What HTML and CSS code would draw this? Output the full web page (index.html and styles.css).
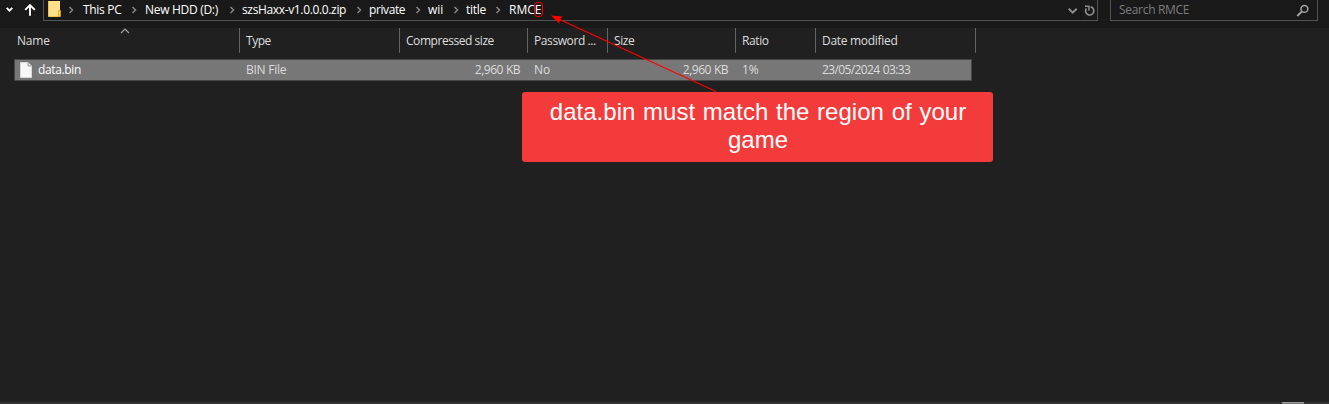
FILE: index.html
```html
<!DOCTYPE html>
<html lang="en">
<head>
<meta charset="utf-8">
<title>RMCE</title>
<link rel="stylesheet" href="styles.css">
</head>
<body>
<div class="window">
  <header class="toolbar">
    <svg class="nav-icons" width="43" height="28" viewBox="0 0 43 28" fill="none" stroke="#fff">
      <path d="M6.7 7.8 9.5 10.6 12.3 7.8" stroke-width="1.9"/>
      <path d="M30 15.8V5M25.2 9.8 30 5 34.8 9.8" stroke-width="1.9"/>
    </svg>
    <div class="address">
      <svg class="folder" width="20" height="20" viewBox="0 0 20 20">
        <path d="M4 1H16V16.5H4Z" fill="#ffe08a"/>
        <path d="M4.5 1V16.5H15" fill="none" stroke="#f3c44c"/>
        <path d="M14.5 10.5H16.5V16.5H14.5Z" fill="#ffd45e" stroke="#d9a520" stroke-width=".8"/>
      </svg>
      <nav class="crumbs">
        <svg class="sep" viewBox="0 0 6 8"><path d="M1.5 1 4.5 4 1.5 7"/></svg><span class="c-pc">This PC</span>
        <svg class="sep" viewBox="0 0 6 8"><path d="M1.5 1 4.5 4 1.5 7"/></svg><span class="c-hdd">New HDD (D:)</span>
        <svg class="sep" viewBox="0 0 6 8"><path d="M1.5 1 4.5 4 1.5 7"/></svg><span class="c-zip">szsHaxx-v1.0.0.0.zip</span>
        <svg class="sep" viewBox="0 0 6 8"><path d="M1.5 1 4.5 4 1.5 7"/></svg><span class="c-priv">private</span>
        <svg class="sep" viewBox="0 0 6 8"><path d="M1.5 1 4.5 4 1.5 7"/></svg><span class="c-wii">wii</span>
        <svg class="sep" viewBox="0 0 6 8"><path d="M1.5 1 4.5 4 1.5 7"/></svg><span class="c-title">title</span>
        <svg class="sep" viewBox="0 0 6 8"><path d="M1.5 1 4.5 4 1.5 7"/></svg><span class="c-rmce">RMCE</span>
      </nav>
      <svg class="address-tools" width="33" height="20" viewBox="0 0 33 20" fill="none" stroke="#8c8c8c">
        <path d="M4.7 8.7 8.7 12.7 12.7 8.7" stroke-width="2"/>
        <path d="M16.5 0V20" stroke="#151515"/>
        <path d="M26.6 6.9A4.1 4.1 0 1 1 22.3 8.6" stroke-width="1.7"/>
        <path d="M21 6.3H24.9V10.4" stroke-width="1.5"/>
      </svg>
    </div>
    <div class="search">
      <span>Search RMCE</span>
      <svg width="14" height="14" viewBox="0 0 14 14" fill="none" stroke="#a2a2a2">
        <circle cx="9.4" cy="4.9" r="3.4" stroke-width="1.6"/>
        <path d="M6.9 7.4 2.3 12" stroke-width="2"/>
      </svg>
    </div>
  </header>
  <main class="list">
    <div class="row head">
      <div><span class="h-name">Name</span></div>
      <div><span class="h-type">Type</span></div>
      <div><span class="h-comp">Compressed size</span></div>
      <div><span class="h-pass">Password ...</span></div>
      <div><span class="h-size">Size</span></div>
      <div><span class="h-ratio">Ratio</span></div>
      <div><span class="h-date">Date modified</span></div>
      <svg class="sort" width="10" height="6" viewBox="0 0 10 6"><path d="M1 5 5 1 9 5" fill="none" stroke="#a0a0a0" stroke-width="1.2"/></svg>
    </div>
    <div class="row file">
      <div class="filename">
        <svg width="12" height="16" viewBox="0 0 12 16"><path d="M.5.5H8L11.5 4V15.5H.5Z" fill="#f8f8f8" stroke="#d8d8d8"/><path d="M8 .5V4H11.5" fill="#ddd" stroke="#888" stroke-width=".8"/></svg>
        <span class="f-name">data.bin</span>
      </div>
      <div><span class="f-type">BIN File</span></div>
      <div class="num"><span class="f-kb">2,960 KB</span></div>
      <div><span class="f-no">No</span></div>
      <div class="num"><span class="f-kb">2,960 KB</span></div>
      <div><span class="f-ratio">1%</span></div>
      <div><span class="f-date">23/05/2024 03:33</span></div>
    </div>
  </main>
  <footer class="status"><span class="view-toggle"></span></footer>
  <svg class="arrow" width="1329" height="404" viewBox="0 0 1329 404">
    <rect x="534.5" y="2.5" width="8" height="14" rx="3" fill="none" stroke="#f00"/>
    <path d="M558 18.8 716 91.5" stroke="#f00" stroke-width="1.1"/>
    <path d="M551 15.5 562.5 16.5 559.5 19.5 559.5 23.8Z" fill="#f00"/>
  </svg>
  <div class="callout">data.bin must match the region of your<br>game</div>
</div>
</body>
</html>
```
FILE: styles.css
```css
* { box-sizing: border-box; }
body { margin: 0; background: #202020; font: 12px/16px "Open Sans", "Noto Sans", sans-serif; color: #fff; overflow: hidden; }
svg { display: block; flex: none; }
.window { position: relative; width: 1329px; height: 404px; display: flex; flex-direction: column; overflow: hidden; }
.toolbar { display: flex; align-items: flex-start; height: 28px; background: #191919; }
.address { display: flex; width: 1055px; height: 21px; border: solid #535353; border-width: 0 1px 1px; }
.folder { margin-right: 4px; }
.crumbs { display: grid; grid-template-columns: 15px 48px 14px 84px 13px 114px 13px 46px 13px 25px 13px 29px 14px 60px; height: 20px; align-items: center; white-space: nowrap; }
.crumbs span { height: 16px; margin-top: -1px; }
.sep { width: 6px; height: 8px; fill: none; stroke: #858585; stroke-width: 1.5; }
.address-tools { margin-left: auto; }
.search { display: flex; justify-content: space-between; margin-left: 12px; width: 208px; height: 21px; padding: 2px 8px 0; border: solid #535353; border-width: 0 1px 1px; color: #7c7c7c; }
.search span { letter-spacing: -.3px; }
.search svg { margin-top: 2px; }
.list { flex: 1; }
.row { display: grid; grid-template-columns: 225px 160px 128px 80px 128px 80px 160px; white-space: nowrap; }
.head { position: relative; width: 976px; height: 25px; padding-left: 15px; color: #dedede; }
.head > div { border-right: 1px solid #636363; padding: 5px 0 0 6px; }
.head > div:first-child { padding-left: 2px; }
.h-name { letter-spacing: -.2px; }
.sort { position: absolute; left: 120px; top: 0; }
.file { width: 958px; height: 22px; margin: 6px 0 0 14px; border: 1px solid #464646; background: #777; color: #dcdcdc; align-items: center; }
.file > div { padding-left: 6px; margin-top: -1px; }
.file .filename { display: flex; align-items: center; gap: 6px; padding-left: 5px; color: #fff; }
.file .num { text-align: right; padding-right: 8px; }
.status { height: 2px; background: #333; display: flex; justify-content: flex-end; }
.view-toggle { width: 22px; height: 2px; margin-right: 25px; background: #777; border-top: 1px solid #999; }
.arrow { position: absolute; left: 0; top: 0; }
.callout { position: absolute; left: 522px; top: 92px; width: 471px; height: 70px; padding-top: 6px; border-radius: 3px; background: #f43b3b; font: 24px/28px "Liberation Sans", Arial, sans-serif; word-spacing: 1px; text-align: center; padding-left: 1px; }

/* tracking for the compact labels */
.c-pc, .c-hdd, .c-title, .h-date { letter-spacing: -.3px; }
.c-zip, .f-name { letter-spacing: -.35px; }
.c-priv, .h-pass, .h-ratio, .h-size { letter-spacing: -.4px; }
.h-comp, .h-type { letter-spacing: -.45px; }
.f-kb { letter-spacing: -.5px; word-spacing: .4px; }
.f-type { letter-spacing: -.25px; }
.f-date { letter-spacing: -.62px; word-spacing: .8px; }
.callout { letter-spacing: .02px; }
```
